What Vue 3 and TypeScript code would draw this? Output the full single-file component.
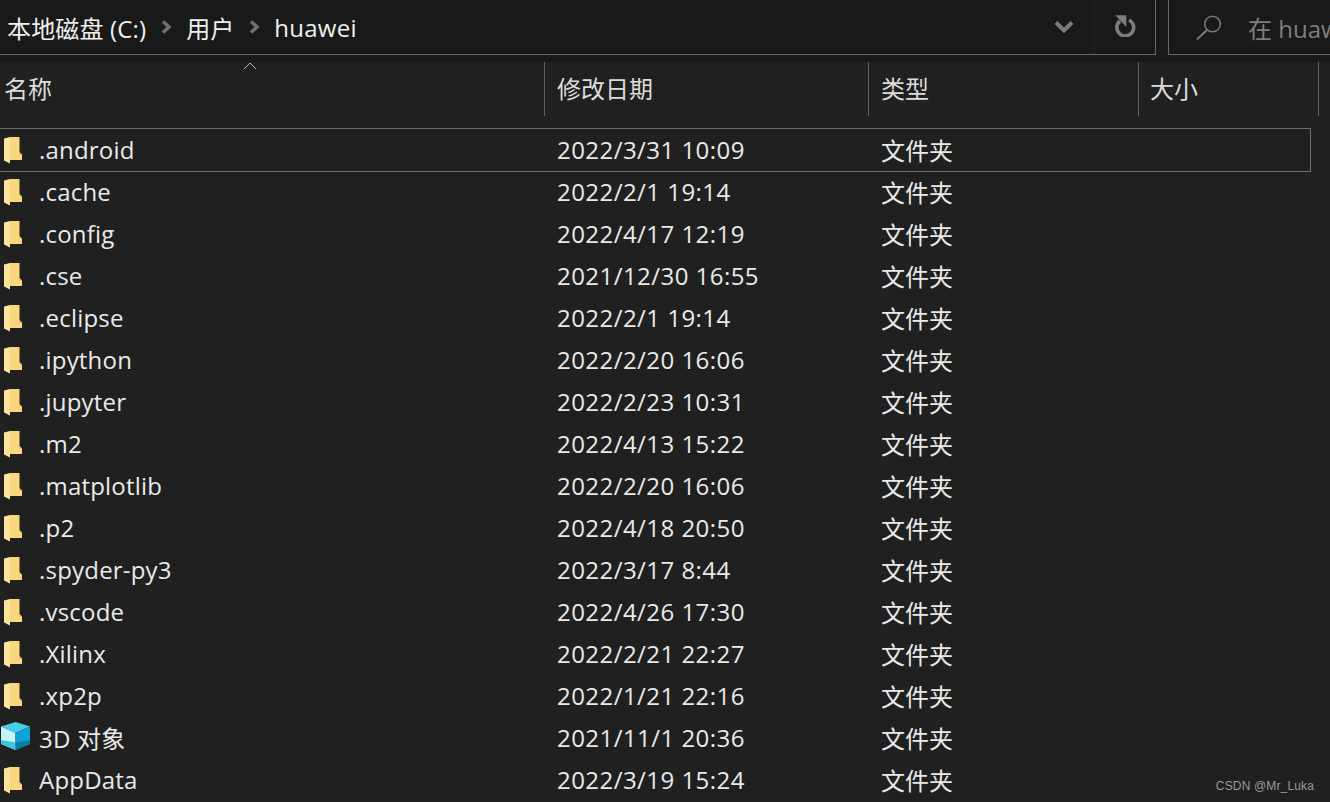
<script setup lang="ts">
interface Row { name: string; date: string; cube?: boolean }
const rows: Row[] = [
  { name: '.android', date: '2022/3/31 10:09' },
  { name: '.cache', date: '2022/2/1 19:14' },
  { name: '.config', date: '2022/4/17 12:19' },
  { name: '.cse', date: '2021/12/30 16:55' },
  { name: '.eclipse', date: '2022/2/1 19:14' },
  { name: '.ipython', date: '2022/2/20 16:06' },
  { name: '.jupyter', date: '2022/2/23 10:31' },
  { name: '.m2', date: '2022/4/13 15:22' },
  { name: '.matplotlib', date: '2022/2/20 16:06' },
  { name: '.p2', date: '2022/4/18 20:50' },
  { name: '.spyder-py3', date: '2022/3/17 8:44' },
  { name: '.vscode', date: '2022/4/26 17:30' },
  { name: '.Xilinx', date: '2022/2/21 22:27' },
  { name: '.xp2p', date: '2022/1/21 22:16' },
  { name: '3D 对象', date: '2021/11/1 20:36', cube: true },
  { name: 'AppData', date: '2022/3/19 15:24' },
]
</script>

<template>
  <div class="page">
    <div class="topbar">
      <div class="address">
        <div class="crumbs">
          <span>本地磁盘 (C:)</span>
          <svg class="sep" width="11" height="14" viewBox="0 0 11 14"><path d="M2 1.5 8 7 2 12.5" fill="none" stroke="#6f6f6f" stroke-width="3.6" /></svg>
          <span>用户</span>
          <svg class="sep" width="11" height="14" viewBox="0 0 11 14"><path d="M2 1.5 8 7 2 12.5" fill="none" stroke="#6f6f6f" stroke-width="3.6" /></svg>
          <span class="last">huawei</span>
        </div>
        <div class="addr-tools">
          <svg class="chev" width="20" height="14" viewBox="0 0 20 14"><path d="M2 2.5 10 10.5 18 2.5" fill="none" stroke="#7c7c7c" stroke-width="4" /></svg>
          <div class="refresh">
            <svg class="reload" width="22" height="23" viewBox="0 0 22 23"><path d="M6 7A8.4 8.4 0 1 0 15 6" fill="none" stroke="#7c7c7c" stroke-width="3.6" /><path d="M3 2H11.5V11Z" fill="#7c7c7c" stroke="#7c7c7c" stroke-width="1.6" /></svg>
          </div>
        </div>
      </div>
      <div class="search">
        <svg class="lens" width="26" height="25" viewBox="0 0 26 25"><circle cx="16.5" cy="9" r="7.8" fill="none" stroke="#7c7c7c" stroke-width="1.5" /><path d="M11 15 1 24.5" fill="none" stroke="#7c7c7c" stroke-width="1.8" /></svg>
        <span>在 huawei 中搜索</span>
      </div>
    </div>

    <div class="head">
      <div class="hcell c-name">名称<svg class="sort" width="14" height="8" viewBox="0 0 14 8"><path d="M1 7 7 1l6 6" fill="none" stroke="#b5b5b5" stroke-width="1" /></svg></div>
      <div class="hcell c-date">修改日期</div>
      <div class="hcell c-type">类型</div>
      <div class="hcell c-size">大小</div>
    </div>

    <div class="list">
      <div v-for="(r, i) in rows" :key="r.name" class="row" :class="{ focus: i === 0 }">
        <div class="c-name cell">
          <svg v-if="r.cube" class="cube" width="29" height="28" viewBox="0 0 29 28">
            <path d="M14.5 0 29 4.5 14.5 11 0 4.5Z" fill="#48cde4" />
            <path d="M0 4.5 14.5 11V28L0 22Z" fill="#c6f3f8" />
            <path d="M29 4.5 14.5 11V28L29 22Z" fill="#0ea2d8" />
            <path d="M0 18 14.5 20.5V28L0 22Z" fill="#3cc8dc" />
            <path d="M29 18 14.5 20.5V28L29 22Z" fill="#0a7fa0" />
          </svg>
          <svg v-else class="folder" width="18" height="27" viewBox="0 0 18 27">
            <path d="M6 0H15.5V15L18 17.5V23H6Z" fill="#f9d77c" />
            <path d="M15.5 15 18 17.5H15.5Z" fill="#d9a93f" />
            <path d="M0 1.5 6 0V26.5L0 23.5Z" fill="#fce49c" />
          </svg>
          <span class="fname">{{ r.name }}</span>
        </div>
        <div class="c-date cell">{{ r.date }}</div>
        <div class="c-type cell">文件夹</div>
        <div class="c-size cell"></div>
      </div>
    </div>

    <div class="mark">CSDN @Mr_Luka</div>
  </div>
</template>

<style>
html, body { margin: 0; background: #202020; overflow: hidden; }
</style>

<style scoped>
.page {
  position: relative;
  width: 1330px;
  height: 802px;
  overflow: hidden;
  background: #202020;
  color: #eaeaea;
  font-family: "Open Sans", "Noto Sans CJK SC", sans-serif;
  font-size: 24px;
}
.topbar {
  display: flex;
  height: 62px;
  background: #191919;
  gap: 12px;
}
.address {
  flex: none;
  width: 1156px;
  height: 55px;
  box-sizing: border-box;
  border: 1px solid #6a6a6a;
  border-width: 0 1px 1px 0;
  display: flex;
  align-items: center;
  justify-content: space-between;
}
.crumbs {
  display: flex;
  align-items: center;
  padding-left: 7px;
  color: #f0f0f0;
  white-space: nowrap;
}
.crumbs span:first-child { letter-spacing: 0.15px; }
.crumbs .last { letter-spacing: 0.3px; }
.sep { margin: 0 14px 0 15px; flex: none; }
.addr-tools { display: flex; align-items: center; height: 100%; }
.chev { margin-right: 20px; flex: none; }
.refresh {
  width: 61px;
  height: 100%;
  border-left: 1px solid #222;
  display: flex;
  align-items: center;
  justify-content: center;
  box-sizing: border-box;
}
.reload { margin-bottom: 3px; }
.search {
  flex: 1;
  min-width: 0;
  height: 55px;
  box-sizing: border-box;
  border: 1px solid #6a6a6a;
  border-width: 0 0 1px 1px;
  display: flex;
  align-items: center;
  padding-left: 27px;
  gap: 26px;
  color: #7f7f7f;
  white-space: nowrap;
  overflow: hidden;
}
.lens { flex: none; }
.head {
  display: flex;
  height: 54px;
  margin-bottom: 12px;
}
.hcell {
  position: relative;
  flex: none;
  box-sizing: border-box;
  height: 54px;
  padding-bottom: 4px;
  display: flex;
  align-items: center;
  border-right: 1px solid #5f5f5f;
  color: #dcdcdc;
}
.c-name { width: 545px; flex: none; }
.c-date { width: 324px; flex: none; }
.c-type { width: 270px; flex: none; }
.c-size { width: 180px; flex: none; }
.hcell.c-name { padding-left: 4px; }
.hcell.c-date { padding-left: 12px; }
.hcell.c-type { padding-left: 12px; }
.hcell.c-size { padding-left: 11px; }
.sort { position: absolute; left: 243px; top: 0; }
.list { display: flex; flex-direction: column; }
.row {
  position: relative;
  display: flex;
  height: 42px;
  align-items: center;
  flex: none;
}
.row.focus::after {
  content: "";
  position: absolute;
  left: -1px;
  top: 0;
  width: 1312px;
  height: 44px;
  box-sizing: border-box;
  border: 1px solid #6e6e6e;
}
.cell { white-space: nowrap; box-sizing: border-box; }
.row .c-name { display: flex; align-items: center; position: relative; padding-left: 39px; }
.row .c-date { padding-left: 12px; letter-spacing: 0.45px; }
.row .c-type { padding-left: 12px; }
.fname { letter-spacing: 0.2px; }
.folder { position: absolute; left: 4px; top: 50%; margin-top: -12px; }
.cube { position: absolute; left: 1px; top: 50%; margin-top: -15px; }
.mark {
  position: absolute;
  right: 16px;
  bottom: 9px;
  font-family: "Liberation Sans", sans-serif;
  font-size: 12px;
  letter-spacing: 0.15px;
  color: #9a9a9a;
}
</style>
